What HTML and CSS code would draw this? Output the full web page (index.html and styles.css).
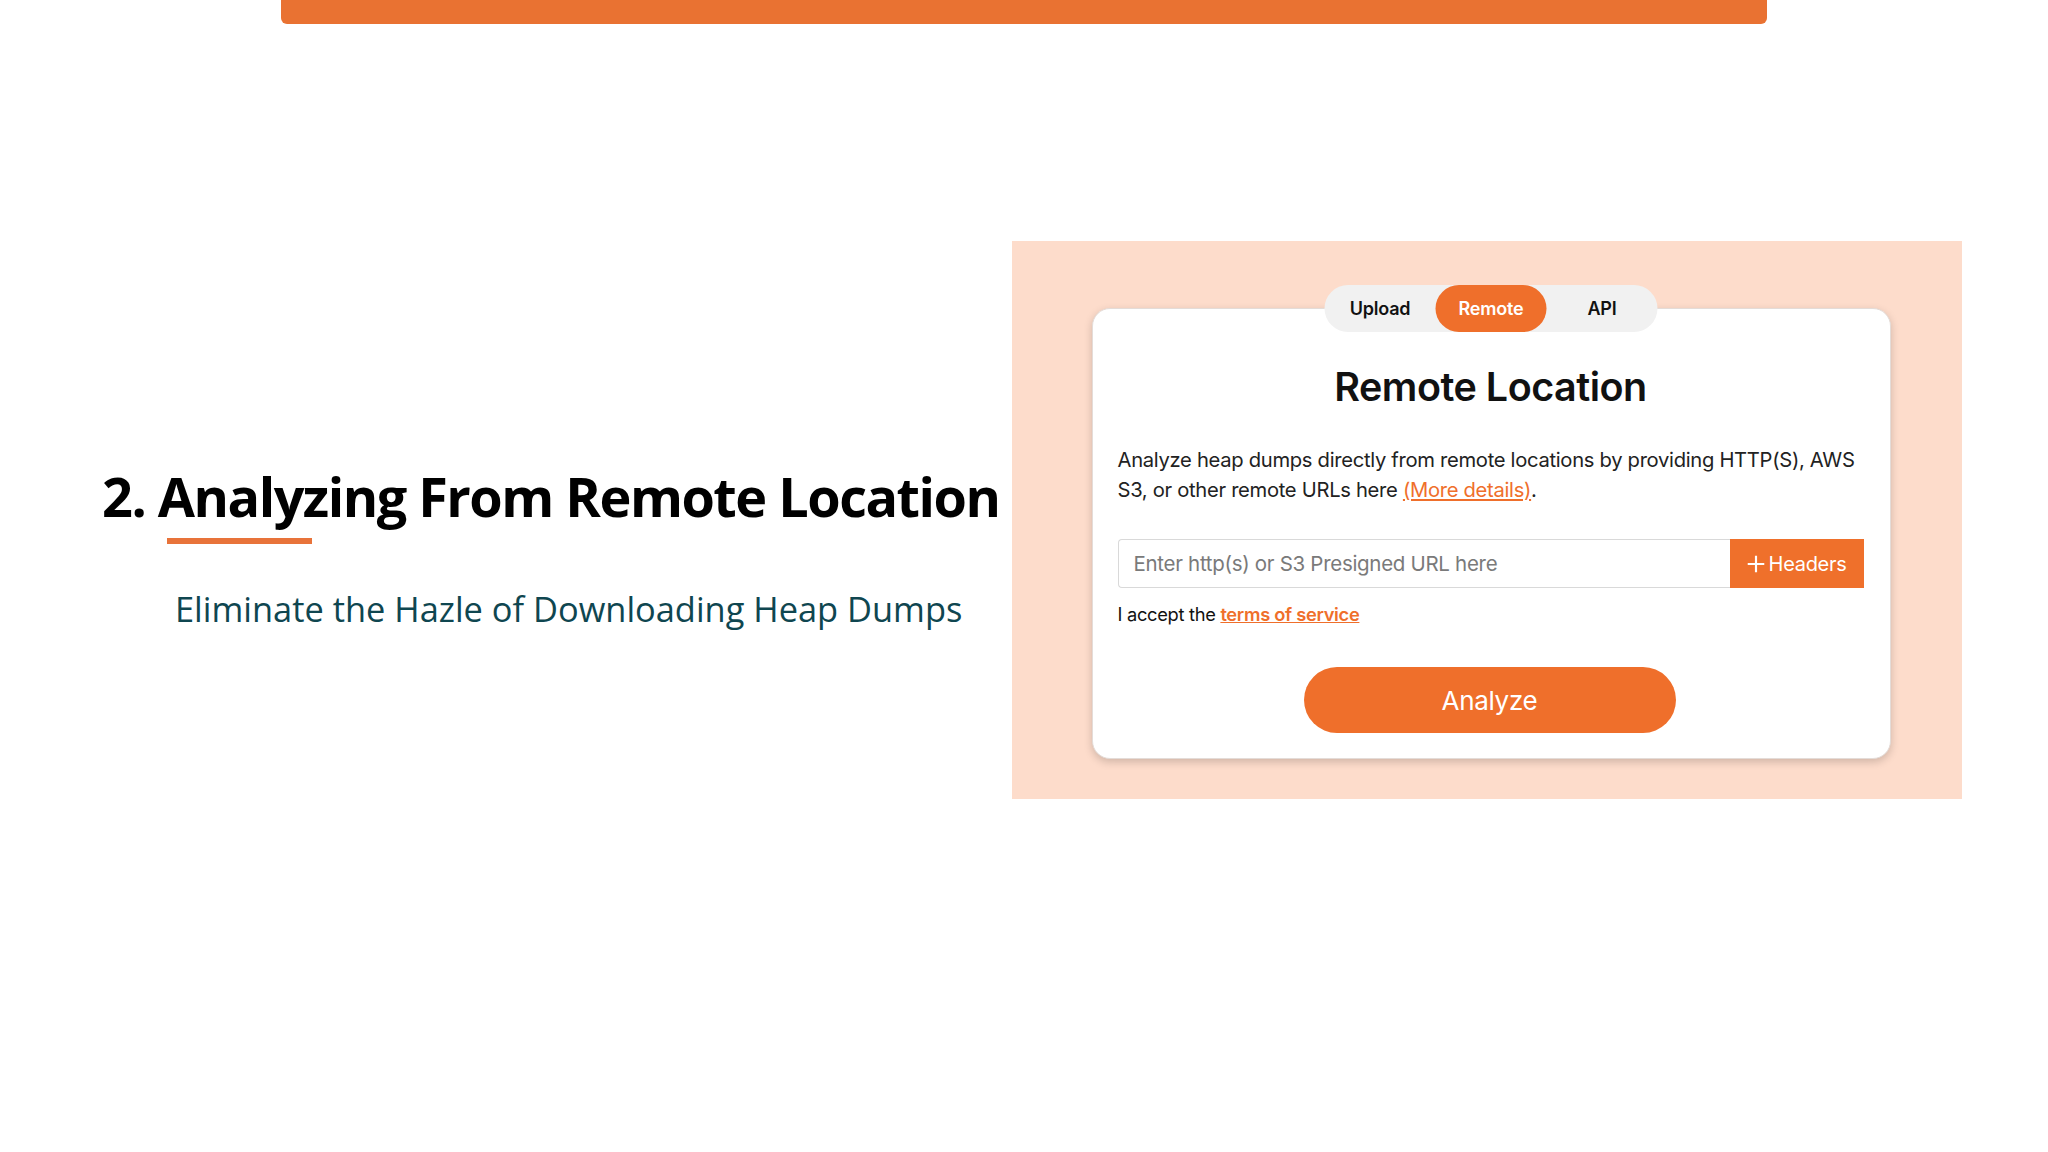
FILE: index.html
```html
<!DOCTYPE html>
<html lang="en">
<head>
<meta charset="utf-8">
<title>Analyzing From Remote Location</title>
<link rel="stylesheet" href="styles.css">
</head>
<body>
<div class="slide">
  <div class="topbar"></div>
  <div class="content">
    <section class="intro">
      <h1 class="heading">2. Analyzing From Remote Location</h1>
      <div class="underline"></div>
      <p class="subtitle">Eliminate the Hazle of Downloading Heap Dumps</p>
    </section>
    <section class="panel">
      <div class="card">
        <div class="tabs">
          <span class="tab">Upload</span>
          <span class="tab active">Remote</span>
          <span class="tab">API</span>
        </div>
        <h2 class="card-title">Remote Location</h2>
        <p class="desc">Analyze heap dumps directly from remote locations by providing HTTP(S), AWS S3, or other remote URLs here <a class="more" href="#">(More details)</a>.</p>
        <div class="url-row">
          <input class="url-input" type="text" placeholder="Enter http(s) or S3 Presigned URL here">
          <button class="headers-btn" type="button">
            <svg class="plus" viewBox="0 0 20 20" width="18" height="18"><path d="M10 2v16M2 10h16" stroke="#fff" stroke-width="2.4" stroke-linecap="square" fill="none"/></svg>
            <span>Headers</span>
          </button>
        </div>
        <p class="accept">I accept the <a class="tos" href="#">terms of service</a></p>
        <div class="actions">
          <button class="analyze" type="button">Analyze</button>
        </div>
      </div>
    </section>
  </div>
</div>
</body>
</html>
```
FILE: styles.css
```css
html, body {
  margin: 0;
  padding: 0;
  background: #ffffff;
}
.slide {
  width: 2048px;
  height: 1152px;
  display: flex;
  flex-direction: column;
  align-items: center;
  overflow: hidden;
}
.topbar {
  width: 1486px;
  height: 24px;
  background: #e97232;
  border-radius: 0 0 6px 6px;
  flex: none;
}
.content {
  width: 2048px;
  display: flex;
  margin-top: 217px;
}
.intro {
  width: 910px;
  padding-left: 102px;
  padding-top: 220px;
  box-sizing: content-box;
  font-family: "Open Sans", "Noto Sans", sans-serif;
}
.heading {
  margin: 0;
  font-size: 54px;
  font-weight: 700;
  line-height: 70px;
  color: #000;
  white-space: nowrap;
  letter-spacing: -1.5px;
}
.underline {
  width: 145px;
  height: 6px;
  background: #e8733a;
  margin-left: 65px;
  margin-top: 7px;
}
.subtitle {
  margin: 43px 0 0 73px;
  font-size: 34.4px;
  line-height: 44px;
  color: #0f4650;
  white-space: nowrap;
}
.panel {
  width: 950px;
  height: 558px;
  background: #fddccb;
  display: flex;
  justify-content: center;
  padding: 67px 0 0 8px;
  box-sizing: border-box;
}
.card {
  position: relative;
  width: 799px;
  height: 451px;
  box-sizing: border-box;
  background: #fff;
  border-radius: 18px;
  border: 1px solid #e4dcd8;
  box-shadow: 0 3px 8px rgba(0, 0, 0, 0.18);
  padding: 56px 26px 0 25px;
  font-family: "Inter", "Liberation Sans", sans-serif;
  color: #1a1a1a;
  display: flex;
  flex-direction: column;
}
.tabs {
  position: absolute;
  top: -24px;
  left: 50%;
  transform: translateX(-50%);
  display: flex;
  background: #f1f1f1;
  border-radius: 24px;
  height: 47px;
}
.tab {
  width: 111px;
  display: flex;
  align-items: center;
  justify-content: center;
  font-size: 18px;
  font-weight: 600;
  color: #111;
  border-radius: 24px;
  letter-spacing: -0.2px;
}
.tab.active {
  background: #ef6f2b;
  color: #fff;
}
.card-title {
  margin: 0;
  text-align: center;
  font-size: 39.5px;
  line-height: 44px;
  font-weight: 600;
  color: #111;
  letter-spacing: -0.5px;
}
.desc {
  margin: 36px 0 0;
  font-size: 20.2px;
  line-height: 30px;
  color: #222;
  letter-spacing: -0.3px;
}
.more {
  color: #ef6f2b;
  text-decoration: underline;
}
.url-row {
  display: flex;
  margin-top: 34px;
  height: 49px;
}
.url-input {
  flex: 1;
  min-width: 0;
  box-sizing: border-box;
  height: 49px;
  border: 1px solid #d9d9d9;
  border-right: none;
  border-radius: 4px 0 0 4px;
  padding: 0 15px;
  font-family: "Inter", "Liberation Sans", sans-serif;
  font-size: 20.5px;
  color: #333;
  letter-spacing: -0.3px;
  outline: none;
}
.url-input::placeholder {
  color: #7a7a7a;
}
.headers-btn {
  width: 134px;
  height: 49px;
  border: none;
  background: #ef702b;
  color: #fff;
  display: flex;
  align-items: center;
  justify-content: center;
  gap: 4px;
  font-family: "Inter", "Liberation Sans", sans-serif;
  font-size: 20px;
  letter-spacing: -0.3px;
  padding: 0;
}
.plus {
  display: block;
}
.accept {
  margin: 14px 0 0;
  font-size: 18.3px;
  line-height: 24px;
  color: #111;
  letter-spacing: -0.3px;
}
.tos {
  color: #ef6f2b;
  font-weight: 600;
  text-decoration: underline;
}
.actions {
  display: flex;
  justify-content: center;
  margin-top: 41px;
}
.analyze {
  width: 372px;
  height: 66px;
  border: none;
  border-radius: 33px;
  background: #ef6f2b;
  color: #fff;
  font-family: "Inter", "Liberation Sans", sans-serif;
  font-size: 26px;
  letter-spacing: -0.3px;
  margin-left: -2px;
}
```
